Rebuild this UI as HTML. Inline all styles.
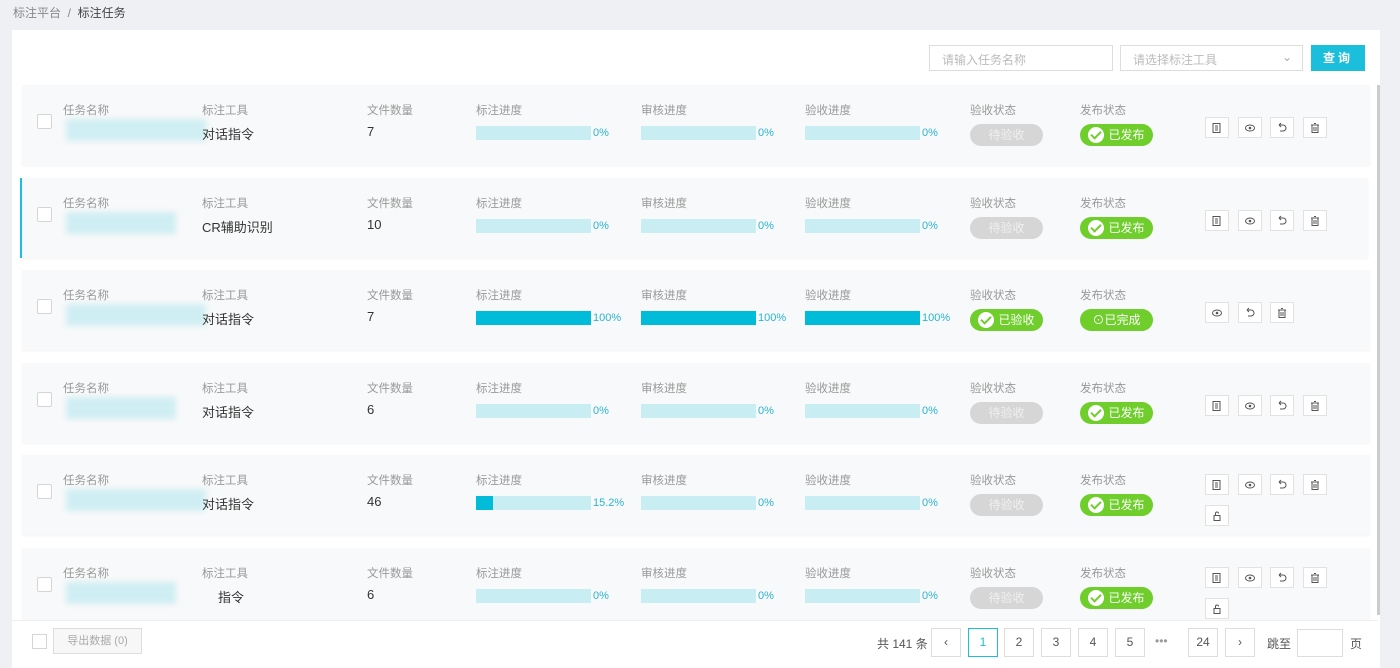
<!DOCTYPE html>
<html><head><meta charset="utf-8"><style>
*{box-sizing:border-box;margin:0;padding:0}
body{width:1400px;height:668px;overflow:hidden;background:#eef0f3;font-family:"Liberation Sans","Noto Sans CJK SC",sans-serif;color:#333;position:relative}
.abs{position:absolute}
.bc{left:13px;top:4px;font-size:12px;color:#888}
.bc b{font-weight:normal;color:#444}
.card{left:12px;top:30px;width:1368px;height:638px;background:#fff}
.inp{top:45px;height:26px;border:1px solid #ddd;background:#fff;font-size:12px;color:#bbb;padding:5px 12px}
.btn{left:1311px;top:45px;width:54px;height:26px;background:#1bbfdc;color:#fff;font-size:12px;text-align:center;line-height:26px;font-weight:bold;letter-spacing:3px}
.row{left:22px;width:1348px;height:80px;background:#f8f9fa;box-shadow:0 1px 2px rgba(0,0,0,.05)}
.row .cb{left:15px;top:29px;width:15px;height:15px;border:1px solid #d5d5d5;background:#fff;border-radius:2px}
.lb{font-size:11.5px;color:#999;top:17px}
.val{font-size:13px;color:#333;top:39px}
.bar{top:41px;width:115px;height:14px;background:#c8eef4}
.bar i{display:block;height:100%;background:#00bcd9}
.pc{top:42px;font-size:11px;color:#2ab4cf}
.pill{top:39px;width:73px;height:22px;border-radius:11px;font-size:12px;color:#fff;line-height:22px;text-align:center}
.gray{background:#d6d6d6;color:#f0f0f0}
.green{background:#6fce2c}
.chk{display:inline-block;width:16px;height:16px;border-radius:50%;background:#fff;vertical-align:-4px;margin-right:4px;position:relative}
.chk:after{content:"";position:absolute;left:5px;top:2px;width:4px;height:8px;border:solid #6fce2c;border-width:0 2px 2px 0;transform:rotate(45deg)}
.ic{width:24px;height:21px;border:1px solid #e2e2e2;background:#fff;top:32px;font-size:11px;color:#555;text-align:center;line-height:19px}
.ic svg{margin-top:4px}
.blur{top:34px;height:22px;background:#cfeef3;filter:blur(3px)}
.pg{top:628px;width:30px;height:29px;border:1px solid #ddd;background:#fff;font-size:12px;text-align:center;line-height:27px;color:#555}
.foot{left:12px;top:620px;width:1366px;height:48px;background:#fff;border-top:1px solid #eee}
</style></head><body>
<div class="abs bc">标注平台 &nbsp;/&nbsp; <b>标注任务</b></div>
<div class="abs card"></div>
<div class="abs inp" style="left:929px;width:184px">请输入任务名称</div>
<div class="abs inp" style="left:1120px;width:183px">请选择标注工具<span style="position:absolute;right:10px;top:4px;color:#aaa">&#8964;</span></div>
<div class="abs btn">查询</div>
<div class="abs" style="left:1377px;top:85px;width:3px;height:530px;background:#ccc"></div>

<div id="rows"></div>
<script>
var rows=[
[85,'对话指令','7',[0,0,0],'p','f',1],
[178,'CR辅助识别','10',[0,0,0],'p','f',1],
[270,'对话指令','7',[100,100,100],'d','c',0],
[363,'对话指令','6',[0,0,0],'p','f',1],
[455,'对话指令','46',[15.2,0,0],'p','f',2],
[548,'指令','6',[0,0,0],'p','f',2]];
var ico=['<svg width="12" height="12" viewBox="0 0 12 12"><rect x="2" y="1.5" width="7" height="9" fill="none" stroke="#555"/><path d="M4 4h3M4 6h3M4 8h3" stroke="#555"/></svg>',
'<svg width="12" height="12" viewBox="0 0 12 12"><ellipse cx="6" cy="6" rx="4.5" ry="3" fill="none" stroke="#555"/><circle cx="6" cy="6" r="1.3" fill="#555"/></svg>',
'<svg width="12" height="12" viewBox="0 0 12 12"><path d="M3 3h4a3 3 0 0 1 0 6H4M3 3l2-2M3 3l2 2" fill="none" stroke="#555"/></svg>',
'<svg width="12" height="12" viewBox="0 0 12 12"><path d="M2 3h8M5 1.5h2M3 3v7.5h6V3M5 5v4M7 5v4" fill="none" stroke="#555"/></svg>',
'<svg width="12" height="12" viewBox="0 0 12 12"><rect x="3" y="5.5" width="6" height="5" fill="none" stroke="#555"/><path d="M4.5 5.5V3.5a1.5 1.5 0 0 1 3 0" fill="none" stroke="#555"/></svg>'];
var h='';
rows.forEach(function(r,k){
 var y=r[0];
 h+='<div class="abs row" style="top:'+y+'px;'+(k==1?'border-left:2px solid #1bbfdc;left:20px;':'')+'">';
 h+='<div class="abs cb"></div>';
 h+='<div class="abs lb" style="left:41px">任务名称</div>';
 h+='<div class="abs blur" style="left:44px;width:'+(k%2?110:140)+'px"></div>';
 h+='<div class="abs lb" style="left:180px">标注工具</div><div class="abs val" style="left:'+(k==5?196:180)+'px">'+r[1]+'</div>';
 h+='<div class="abs lb" style="left:345px">文件数量</div><div class="abs val" style="left:345px">'+r[2]+'</div>';
 var L=['标注进度','审核进度','验收进度'],X=[454,619,783];
 for(var i=0;i<3;i++){h+='<div class="abs lb" style="left:'+X[i]+'px">'+L[i]+'</div><div class="abs bar" style="left:'+X[i]+'px"><i style="width:'+r[3][i]+'%"></i></div><div class="abs pc" style="left:'+(X[i]+117)+'px">'+r[3][i]+'%</div>';}
 h+='<div class="abs lb" style="left:948px">验收状态</div>';
 h+=r[4]=='p'?'<div class="abs pill gray" style="left:948px">待验收</div>':'<div class="abs pill green" style="left:948px"><span class="chk"></span>已验收</div>';
 h+='<div class="abs lb" style="left:1058px">发布状态</div>';
 h+=r[5]=='f'?'<div class="abs pill green" style="left:1058px"><span class="chk"></span>已发布</div>':'<div class="abs pill green" style="left:1058px">⊙已完成</div>';
 var set=r[6]==0?[1,2,3]:[0,1,2,3];
 var t=r[6]==2?19:32;
 set.forEach(function(s,j){h+='<div class="abs ic" style="top:'+t+'px;left:'+(1183+j*32.5)+'px">'+ico[s]+'</div>';});
 if(r[6]==2)h+='<div class="abs ic" style="left:1183px;top:50px">'+ico[4]+'</div>';
 h+='</div>';
});
document.getElementById('rows').innerHTML=h;
</script>
<div class="abs foot"></div>
<div class="abs" style="left:32px;top:634px;width:15px;height:15px;border:1px solid #d5d5d5;background:#fff"></div>
<div class="abs" style="left:53px;top:628px;width:89px;height:26px;border:1px solid #ddd;background:#f7f7f7;font-size:11px;color:#aaa;text-align:center;line-height:24px">导出数据 (0)</div>
<div class="abs" style="left:877px;top:635px;font-size:12px;color:#555">共 141 条</div>
<div class="abs pg" style="left:931px">&lsaquo;</div>
<div class="abs pg" style="left:968px;border-color:#1bbfdc;color:#1bbfdc">1</div>
<div class="abs pg" style="left:1004px">2</div>
<div class="abs pg" style="left:1041px">3</div>
<div class="abs pg" style="left:1078px">4</div>
<div class="abs pg" style="left:1115px">5</div>
<div class="abs" style="left:1155px;top:634px;font-size:12px;color:#999">•••</div>
<div class="abs pg" style="left:1188px">24</div>
<div class="abs pg" style="left:1225px">&rsaquo;</div>
<div class="abs" style="left:1267px;top:635px;font-size:12px;color:#555">跳至</div>
<div class="abs" style="left:1297px;top:629px;width:46px;height:28px;border:1px solid #ddd;background:#fff"></div>
<div class="abs" style="left:1350px;top:635px;font-size:12px;color:#555">页</div>
</body></html>
